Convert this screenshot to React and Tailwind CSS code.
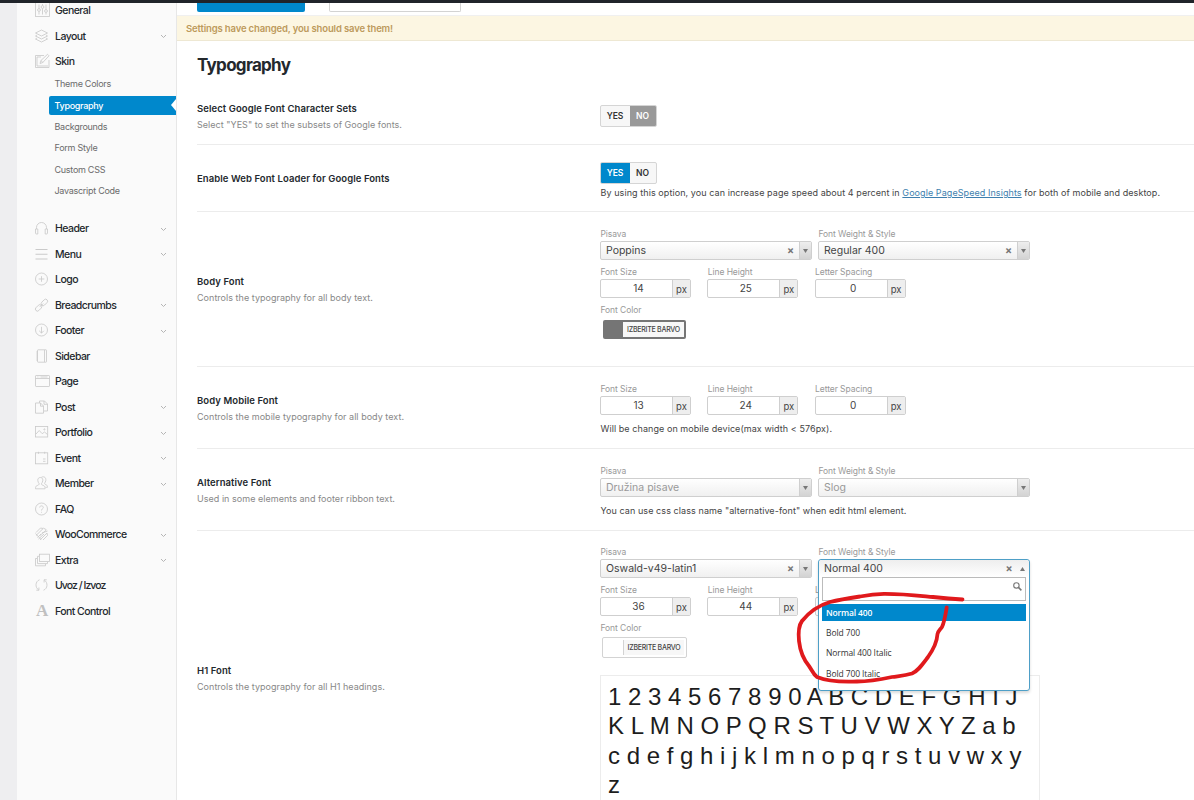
// 15x14 line icons used by the options menu
const icons = {
  general: (
    <>
      <rect x=".5" y="-1.5" width="14" height="15" />
      <path d="M4 1.5v4M4 8.5v3M7.500 1v1.500M7.500 5.500v6M11 1.500v5M11 9.500v2" />
      <circle cx="4" cy="7" r="1.400" />
      <circle cx="7.500" cy="4" r="1.400" />
      <circle cx="11" cy="8" r="1.400" />
    </>
  ),
  layout: <path d="M6.500 1 12.500 4 6.500 7 .5 4ZM2 6 .5 7l6 3 6-3L11 6M2 9 .5 10l6 3 6-3L11 9" />,
  skin: (
    <>
      <path d="M9 1.500H.5v12h13.500V6M2 3h4M2 3v9M2 12h11" />
      <path d="M5 9.500 6 6.500 12.500.3 14 1.800 7.800 8.500ZM6 6.500l1.800 2" />
    </>
  ),
  header: (
    <path d="M1.500 8V6.500a5 5 0 0 1 10 0V8M.5 8h2.300v5H1.500a1 1 0 0 1-1-1ZM12.500 8h-2.300v5h1.300a1 1 0 0 0 1-1Z" />
  ),
  menu: <path d="M.5 2.500h12M.5 7.200h12M.5 12h12" strokeWidth="1.100" />,
  logo: (
    <>
      <circle cx="6.500" cy="7" r="6" />
      <path d="M6.500 4.200v5.600M3.700 7h5.600" />
    </>
  ),
  breadcrumbs: (
    <>
      <rect x="5.700" y="2.400" width="7.400" height="4" rx="2" transform="rotate(-45 9.400 4.400)" />
      <rect x="-.1" y="7.900" width="7.400" height="4" rx="2" transform="rotate(-45 3.600 9.900)" />
      <path d="m4.800 8.900 3.400-3.400" />
    </>
  ),
  footer: (
    <>
      <circle cx="6.500" cy="7" r="6" />
      <path d="M6.500 3.800v6.200M4.200 7.800l2.300 2.300 2.300-2.300" />
    </>
  ),
  sidebar: (
    <>
      <rect x="2.500" y=".8" width="9" height="12.400" rx=".6" />
      <path d="M9.500 1v12M1.200 3h1.800M1.200 5h1.800M1.200 7h1.800M1.200 9h1.800M1.200 11h1.800" />
    </>
  ),
  page: (
    <>
      <rect x=".5" y="1.500" width="14" height="11" rx=".6" />
      <path d="M.5 4.500h14M5.500 3h7M2 3h.6M3.600 3h.6" />
    </>
  ),
  post: (
    <>
      <path d="M4.500 3V1h5l3 3v7h-3.500M9 1v3.300h3.500" />
      <path d="M.5 3h5l3 3v7.200H.5ZM5.500 3v3.200h3" />
    </>
  ),
  portfolio: (
    <>
      <rect x=".5" y="1.500" width="12.200" height="10.500" />
      <path d="m1 9 3.200-3.500 3 3.200L9.500 7l3 2.500" />
      <circle cx="9.400" cy="4.400" r=".6" />
    </>
  ),
  event: (
    <>
      <rect x=".5" y="1.800" width="12.200" height="11" />
      <path d="M3.500.8v2M9.700.8v2M8 8h2.500M8 10.300h2.500" />
    </>
  ),
  member: (
    <>
      <path d="M5.300 1.500c-1.700 0-2.600 1.200-2.500 2.800.1 1.600.7 2.600 1.300 3.300.1 1.400-1 1.600-2.300 2.100C.8 10.200.5 11 .5 12.800h9.600c0-1.800-.3-2.600-1.300-3.100-1.300-.5-2.400-.7-2.300-2.100.6-.7 1.200-1.700 1.300-3.300.1-1.600-.8-2.800-2.500-2.800Z" />
      <path d="M6.500 1.200c3-1.300 4.700.7 4.300 3.300-.2 1.300-.7 2-1.200 2.600 0 1.200.7 1.400 1.700 1.800.9.400 1.200 1 1.200 2.400h-2" />
    </>
  ),
  faq: (
    <>
      <circle cx="6.500" cy="7" r="6" />
      <path d="M4.700 5.500c0-2.200 3.600-2.200 3.600 0 0 1.300-1.800 1.400-1.800 3M6.500 9.800v.9" />
    </>
  ),
  woocommerce: (
    <>
      <path d="M1 5.500 5.500 1 8 1.500M1 8.500 8.500 1.200 11 2.500M5 8.500 11.500 2.800M2.500 10.500 6 7M5 13 12 6l.5 2.500L8 13M7 6l5.500-2M3.500 12 9 7" />
      <path d="M.5 6.500 6 12.500" />
    </>
  ),
  extra: (
    <>
      <rect x="4.500" y="1.200" width="10" height="7.300" />
      <path d="M4 3.300H2.500v7.300h10V9M2 5.500H.5v7.300h10V11" />
    </>
  ),
  transfer: <path d="M4.500 1.800C.2 3.300-.2 9.500 3.700 12M3.900 9.500V12.200H1.300M8.500 12.200c4.300-1.500 4.700-7.700.8-10.200M9.100 4.500V1.800h2.600" />,
};

const topItems = [
  { icon: 'general', label: 'General' },
  { icon: 'layout', label: 'Layout', arrow: true },
  { icon: 'skin', label: 'Skin' },
];

const skinItems = ['Theme Colors', 'Typography', 'Backgrounds', 'Form Style', 'Custom CSS', 'Javascript Code'];

const items = [
  { icon: 'header', label: 'Header', arrow: true },
  { icon: 'menu', label: 'Menu', arrow: true },
  { icon: 'logo', label: 'Logo' },
  { icon: 'breadcrumbs', label: 'Breadcrumbs', arrow: true },
  { icon: 'footer', label: 'Footer', arrow: true },
  { icon: 'sidebar', label: 'Sidebar' },
  { icon: 'page', label: 'Page' },
  { icon: 'post', label: 'Post', arrow: true },
  { icon: 'portfolio', label: 'Portfolio', arrow: true },
  { icon: 'event', label: 'Event', arrow: true },
  { icon: 'member', label: 'Member', arrow: true },
  { icon: 'faq', label: 'FAQ' },
  { icon: 'woocommerce', label: 'WooCommerce', arrow: true },
  { icon: 'extra', label: 'Extra', arrow: true },
  { icon: 'transfer', label: 'Uvoz / Izvoz' },
  { icon: 'font', label: 'Font Control' },
];

function MenuItem({ icon, label, arrow }) {
  return (
    <li className="flex h-[25.5px] items-center pl-[18px] pr-[9px]">
      {icon === 'font' ? (
        <span className="w-[20px] pl-px font-['Liberation_Serif',serif] text-[17px] leading-none font-bold text-[#c0c0c0]">A</span>
      ) : (
        <svg width="15" height="14" viewBox="0 0 15 14" fill="none" stroke="#cacaca" strokeWidth=".85" className="mr-[5px] overflow-visible">
          {icons[icon]}
        </svg>
      )}
      <span
        className={`flex-1 pt-[1.500px] text-[10.5px] font-medium text-[#23282d] ${
          icon === 'transfer' ? 'tracking-[-0.95px]' : 'tracking-[-0.55px]'
        }`}
      >
        {label}
      </span>
      {arrow && (
        <svg width="7" height="5" viewBox="0 0 7 5" fill="none" stroke="#b5b5b5" className="mt-0.5">
          <path d="m1 1 2.500 2.500L6 1" />
        </svg>
      )}
    </li>
  );
}

function Sidebar() {
  return (
    <aside className="h-full w-[160px] shrink-0 overflow-hidden border-r border-[#e7e7e7] bg-[#fafafa]">
      <ul className="-mt-[5.500px]">
        {topItems.map((item) => (
          <MenuItem key={item.label} {...item} />
        ))}
      </ul>
      <ul className="-mt-[0.7px] mb-[14px] ml-[31.500px]">
        {skinItems.map((label) =>
          label === 'Typography' ? (
            <li key={label} className="flex h-[21.4px] items-center">
              <span className="flex h-[19px] flex-1 items-center justify-between rounded-l-[2px] bg-[#0088cc] pl-[6px] text-[9px] font-medium tracking-[-0.3px] text-white">
                {label}
                <svg width="5" height="12" viewBox="0 0 5 12" fill="#fff">
                  <path d="M5 0v12L0 6Z" />
                </svg>
              </span>
            </li>
          ) : (
            <li key={label} className="flex h-[21.4px] items-center pl-[6px] text-[9px] tracking-[-0.28px] text-[#6b6b6b]">
              {label}
            </li>
          )
        )}
      </ul>
      <ul>
        {items.map((item) => (
          <MenuItem key={item.label} {...item} />
        ))}
      </ul>
    </aside>
  );
}

function Row({ title, desc, className, children }) {
  return (
    <section className={`flex shrink-0 border-b border-[#ececec] ${className}`}>
      <div className="flex w-[403.500px] shrink-0 flex-col justify-center pt-[1.500px]">
        <h3 className="text-[9.5px] leading-[16px] font-semibold tracking-[0.08px] text-[#23282d]">{title}</h3>
        {desc && <p className="text-[9px] leading-[15px] tracking-[0.03px] text-[#888]">{desc}</p>}
      </div>
      <div className="flex-1">{children}</div>
    </section>
  );
}

function Toggle({ on }) {
  return (
    <div className="-ml-[0.500px] flex h-[22px] w-[57px] overflow-hidden rounded-[2px] border border-[#d5d5d5] bg-[#f7f7f7] text-[8.500px] font-semibold text-[#333]">
      <span className={`-my-px -ml-px flex w-[30px] items-center justify-center ${on ? 'bg-[#0088cc] text-white' : ''}`}>YES</span>
      <span className={`-my-px -mr-px flex flex-1 items-center justify-center pr-[2px] ${on ? '' : 'bg-[#999] text-white'}`}>NO</span>
    </div>
  );
}

function Label({ children }) {
  return <div className="h-[14px] text-[8.500px] leading-[14px] tracking-[-0.08px] whitespace-nowrap text-[#999]">{children}</div>;
}

function Select({ label, value, placeholder }) {
  return (
    <div className="w-[211px]">
      <Label>{label}</Label>
      <div className="-ml-[0.500px] flex h-[19px] overflow-hidden rounded-[2px] border border-[#cfcfcf] bg-linear-to-b from-white to-[#f0f0f0]">
        <span className={`flex-1 pl-[5px] text-[10.500px] leading-[17px] ${placeholder ? 'text-[#999]' : 'text-[#444]'}`}>
          {value || placeholder}
        </span>
        {value && <span className="w-[11.500px] text-[10.500px] leading-[18px] font-bold text-[#777]">×</span>}
        <span className="flex w-[12px] items-center justify-center border-l border-[#cfcfcf] bg-linear-to-b from-[#eee] to-[#d3d3d3]">
          <svg width="5" height="4" viewBox="0 0 5 4" fill="#777">
            <path d="M0 0h5L2.500 4Z" />
          </svg>
        </span>
      </div>
    </div>
  );
}

function NumberField({ label, value }) {
  return (
    <div className="w-[90.500px]">
      <Label>{label}</Label>
      <div className="-ml-[0.500px] flex h-[19px] overflow-hidden rounded-[2px] border border-[#cfcfcf] bg-white text-[10px] text-[#444]">
        <span className="flex-1 pl-[4px] text-center leading-[17px]">{value}</span>
        <span className="w-[18px] border-l border-[#cfcfcf] bg-[#eee] text-center text-[9.500px] leading-[19px]">px</span>
      </div>
    </div>
  );
}

function Numbers({ size, height, spacing }) {
  return (
    <div className="flex gap-[16.800px]">
      <NumberField label="Font Size" value={size} />
      <NumberField label="Line Height" value={height} />
      <NumberField label="Letter Spacing" value={spacing} />
    </div>
  );
}

function ColorButton({ dark }) {
  return dark ? (
    <div className="mt-[3px] ml-[2.500px] flex h-[19px] w-[83px] justify-end rounded-[2px] bg-[#757575] p-[2px]">
      <span className="w-[61px] bg-[#f7f7f7] text-center text-[7px] leading-[15px] font-medium tracking-[-0.25px] text-[#444]">IZBERITE BARVO</span>
    </div>
  ) : (
    <div className="mt-[2px] ml-[1.500px] flex h-[21px] w-[85px] justify-end rounded-[2px] border border-[#d3d3d3] bg-white p-[2px]">
      <span className="w-[61px] border-l border-[#d3d3d3] bg-[#f7f7f7] text-center text-[7px] leading-[15px] font-medium tracking-[-0.25px] text-[#444]">IZBERITE BARVO</span>
    </div>
  );
}

function StyleDropdown() {
  const options = ['Bold 700', 'Normal 400 Italic', 'Bold 700 Italic'];
  return (
    <div className="relative w-[211px]">
      <Label>Font Weight &amp; Style</Label>
      <div className="absolute top-[14px] -left-[0.500px] z-10 h-[132px] w-[211.500px] rounded-[3px] border border-[#4e9fc7] bg-white shadow-[0_2px_3px_rgba(0,0,0,0.15)]">
        <div className="flex h-[17px] items-center rounded-t-[3px] bg-linear-to-b from-[#eee] to-white pl-[5px] text-[10.500px] text-[#444]">
          <span className="flex-1">Normal 400</span>
          <span className="w-[14px] pt-px text-[10.500px] font-bold text-[#777]">×</span>
          <svg width="5" height="4" viewBox="0 0 5 4" fill="#777" className="mr-[4px]">
            <path d="M0 4h5L2.500 0Z" />
          </svg>
        </div>
        <div className="mx-[3px] flex h-[24px] justify-end border border-[#bbb] pt-[4px] pr-[3px]">
          <svg width="9" height="9" viewBox="0 0 9 9" fill="none" stroke="#777" strokeWidth="1.100">
            <circle cx="3.400" cy="3.400" r="2.700" />
            <path d="m5.400 5.400 3 3" strokeWidth="1.500" />
          </svg>
        </div>
        <div className="mx-[3px] mt-[2.500px] font-['Open_Sans',sans-serif] text-[8.500px] text-[#333]">
          <div className="h-[17px] bg-[#0088cc] pl-[4px] leading-[17px] font-semibold tracking-[-0.15px] text-white">Normal 400</div>
          <div className="pt-[2px]">
            {options.map((option) => (
              <div key={option} className="h-[20.700px] pl-[4px] leading-[20.700px] tracking-[-0.1px]">
                {option}
              </div>
            ))}
          </div>
        </div>
      </div>
    </div>
  );
}

function FontPreview() {
  return (
    <div className="mt-[17px] -ml-[0.500px] h-[160px] w-[440px] border border-[#ececec] pt-[5.500px] pl-[7px] font-['Liberation_Sans',Arial,sans-serif] text-[24px] leading-[29.600px] whitespace-nowrap text-[#1d1d1d]">
      <p>1 2 3 4 5 6 7 8 9 0 A B C D E F G H I J</p>
      <p>K L M N O P Q R S T U V W X Y Z a b</p>
      <p>c d e f g h i j k l m n o p q r s t u v w x y</p>
      <p>z</p>
    </div>
  );
}

export default function App() {
  return (
    <div className="relative flex h-[800px] w-[1194px] flex-col overflow-hidden bg-white font-['Inter',sans-serif]">
      <div className="h-[3px] shrink-0 bg-[#20242a]" />
      <div className="flex min-h-0 flex-1">
        <div className="w-[17px] shrink-0 bg-[#eeeef0]" />
        <Sidebar />
        <main className="flex min-w-0 flex-1 flex-col overflow-hidden">
          <div className="flex h-[13px] shrink-0 gap-[24px] border-b border-[#f0f0f0] pl-[20px]">
            <div className="h-[9px] w-[108px] rounded-b-[2px] bg-[#0088cc]" />
            <div className="h-[9px] w-[132px] rounded-b-[2px] border border-t-0 border-[#d3d3d3]" />
          </div>
          <div className="h-[25px] shrink-0 border-b border-[#eee8d3] bg-[#fcf6e2] pl-[9px] text-[9.500px] leading-[25px] font-semibold tracking-[-0.14px] text-[#bd9a5c]">
            Settings have changed, you should save them!
          </div>
          <div className="flex flex-col pl-[20px]">
            <h2 className="h-[46px] pt-[12px] text-[17px] leading-[24px] font-bold tracking-[-0.7px] text-[#23282d]">Typography</h2>
            <Row title="Select Google Font Character Sets" desc={'Select "YES" to set the subsets of Google fonts.'} className="h-[58px]">
              <div className="pt-[18px]">
                <Toggle />
              </div>
            </Row>
            <Row title="Enable Web Font Loader for Google Fonts" className="h-[67px]">
              <div className="pt-[17px]">
                <Toggle on />
                <p className="mt-[1px] text-[9px] leading-[16px] tracking-[0.073px] whitespace-nowrap text-[#444]">
                  By using this option, you can increase page speed about 4 percent in{' '}
                  <a className="text-[#3e7fae] underline">Google PageSpeed Insights</a> for both of mobile and desktop.
                </p>
              </div>
            </Row>
            <Row title="Body Font" desc="Controls the typography for all body text." className="h-[155px]">
              <div className="flex flex-col gap-[5px] pt-[15px]">
                <div className="flex gap-[7px]">
                  <Select label="Pisava" value="Poppins" />
                  <Select label="Font Weight &amp; Style" value="Regular 400" />
                </div>
                <Numbers size="14" height="25" spacing="0" />
                <div>
                  <Label>Font Color</Label>
                  <ColorButton dark />
                </div>
              </div>
            </Row>
            <Row title="Body Mobile Font" desc="Controls the mobile typography for all body text." className="h-[82px]">
              <div className="pt-[15px]">
                <Numbers size="13" height="24" spacing="0" />
                <p className="mt-[6px] text-[9px] leading-[16px] tracking-[0.07px] text-[#444]">Will be change on mobile device(max width &lt; 576px).</p>
              </div>
            </Row>
            <Row title="Alternative Font" desc="Used in some elements and footer ribbon text." className="h-[82px]">
              <div className="pt-[15px]">
                <div className="flex gap-[7px]">
                  <Select label="Pisava" placeholder="Družina pisave" />
                  <Select label="Font Weight &amp; Style" placeholder="Slog" />
                </div>
                <p className="mt-[6px] text-[9px] leading-[16px] tracking-[0.08px] text-[#444]">
                  You can use css class name "alternative-font" when edit html element.
                </p>
              </div>
            </Row>
            <Row title="H1 Font" desc="Controls the typography for all H1 headings." className="h-[294px]">
              <div className="pt-[14px]">
                <div className="flex gap-[7px]">
                  <Select label="Pisava" value="Oswald-v49-latin1" />
                  <StyleDropdown />
                </div>
                <div className="mt-[5px]">
                  <Numbers size="36" height="44" />
                </div>
                <div className="mt-[5px]">
                  <Label>Font Color</Label>
                  <ColorButton />
                </div>
                <FontPreview />
              </div>
            </Row>
          </div>
        </main>
      </div>
      {/* hand-drawn marker circle over the style list */}
      <svg
        width="176"
        height="100"
        viewBox="794 588 176 100"
        fill="none"
        stroke="#e0191c"
        strokeWidth="3.800"
        strokeLinecap="round"
        strokeLinejoin="round"
        className="absolute top-[588px] left-[794px] z-20"
      >
        <path d="M946.700 607.500C945.500 615 944 623 942 627C940 630 938 631 937.500 634C937 642 933 650 928 657C922 665 918 671 912 673.500C904 676 898 676 892 677C878 680 868 681.500 857 681.500C845 682 829 682 817 677C813 674 812 670 809 666C804 660 800 650 799 641C798 631 799 625 802 621C810 611 820 605 830 602C840 599.500 850 598 860 596.500C868 595 874 594 884 593.800C905 593.700 922 596 933 597C942 598 953 599 962.500 599.500" />
      </svg>
    </div>
  );
}
